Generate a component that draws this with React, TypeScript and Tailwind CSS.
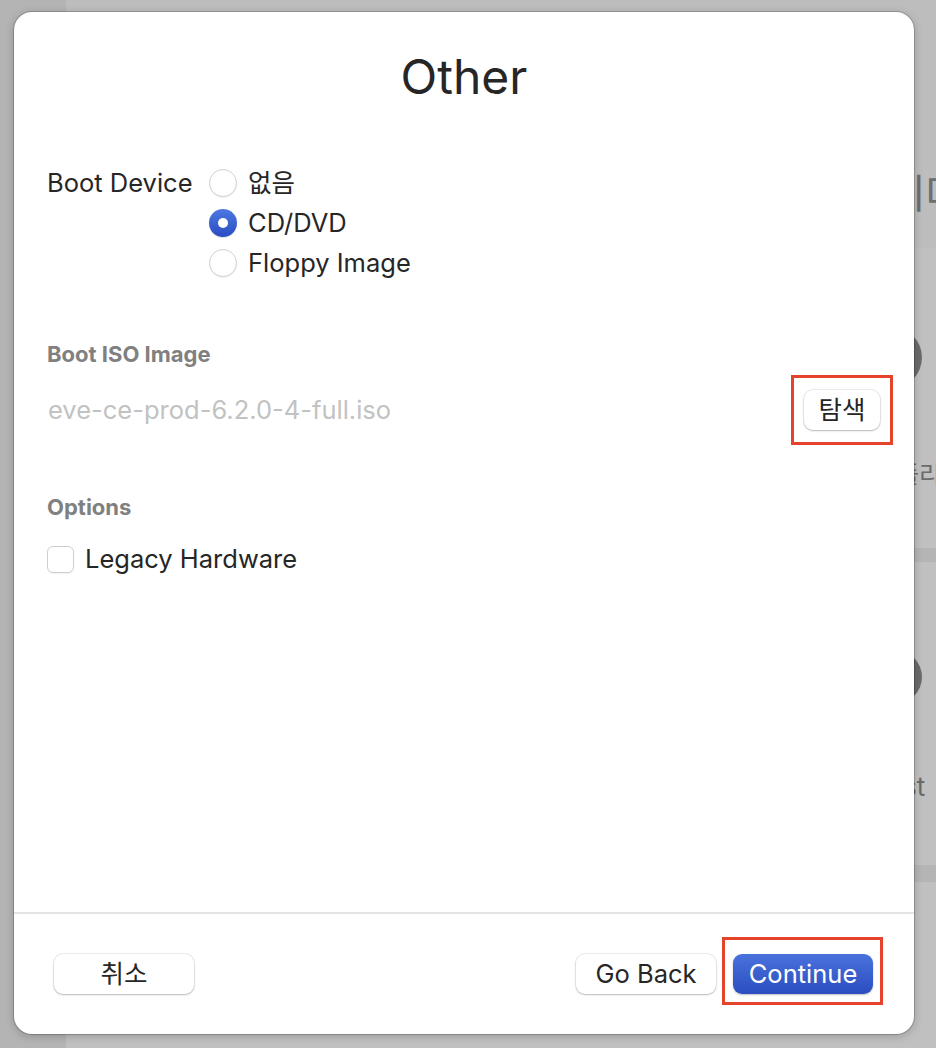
import React from 'react';

const options = ['없음', 'CD/DVD', 'Floppy Image'];

function Radio({ checked }: { checked: boolean }) {
  if (checked) {
    return (
      <span className="flex h-[28px] w-[28px] shrink-0 items-center justify-center rounded-full bg-gradient-to-b from-[#4f78e2] to-[#2a4cc2] shadow-[0_1px_1px_rgba(0,0,0,0.15)]">
        <span className="h-[10px] w-[10px] rounded-full bg-white" />
      </span>
    );
  }
  return (
    <span className="h-[28px] w-[28px] shrink-0 rounded-full border border-[#d2d2d2] bg-white shadow-[0_1px_1px_rgba(0,0,0,0.06)]" />
  );
}

function Button({ children }: { children: React.ReactNode }) {
  return (
    <button className="flex h-[40px] w-[140px] items-center justify-center rounded-[9px] bg-white text-[25.5px] text-[#262626] shadow-[0_0_0_1px_rgba(0,0,0,0.07),0_1px_2px_rgba(0,0,0,0.22)]">
      {children}
    </button>
  );
}

export default function App() {
  const selected = 'CD/DVD';

  return (
    <div className="relative flex h-[1048px] w-[936px] overflow-hidden font-['Inter','Noto_Sans_CJK_KR',sans-serif]">
      {/* window behind the sheet */}
      <div className="w-[66px] shrink-0 bg-[#b4b4b4]" />
      <div className="flex min-w-0 flex-1 flex-col overflow-hidden bg-[#c2c2c2]">
        <div className="flex h-[248px] shrink-0 items-start bg-[#bdbdbd] pl-[786px] pt-[174px]">
          <span className="whitespace-nowrap text-[40px] leading-none text-[#6e6e6e]">습니다</span>
        </div>
        <div className="flex h-[300px] shrink-0 flex-col bg-[#c0c0c0] pl-[795px]">
          <div className="mt-[79px] h-[61px] w-[61px] rounded-full bg-[#6b6b6b]" />
          <span className="ml-[36px] mt-[75px] whitespace-nowrap text-[24px] leading-none text-[#6b6b6b]">플리</span>
        </div>
        <div className="h-[14px] shrink-0 bg-[#b5b5b5]" />
        <div className="flex h-[303px] shrink-0 flex-col bg-[#c0c0c0] pl-[795px]">
          <div className="ml-[7px] mt-[88px] h-[54px] w-[54px] rounded-full bg-[#6b6b6b]" />
          <span className="ml-[12px] mt-[70px] whitespace-nowrap text-[26px] leading-none text-[#6b6b6b]">Test</span>
        </div>
        <div className="h-[17px] shrink-0 bg-[#b5b5b5]" />
        <div className="flex-1 bg-[#c0c0c0]" />
      </div>

      {/* sheet */}
      <div className="absolute left-[14px] top-[12px] flex h-[1022px] w-[900px] flex-col rounded-[18px] bg-white shadow-[0_0_0_1px_rgba(0,0,0,0.18),0_2px_10px_rgba(0,0,0,0.22)]">
        <div className="flex flex-1 flex-col px-[33px] pt-[41px]">
          <h1 className="text-center text-[48px] font-normal leading-[48px] text-[#262626]">Other</h1>

          <div className="mt-[62px] flex">
            <div className="flex h-[40px] w-[162px] items-center text-[25.5px] text-[#262626]">Boot Device</div>
            <div className="flex flex-col">
              {options.map((o) => (
                <label key={o} className="flex h-[40px] items-center gap-[11px] text-[25.5px] text-[#262626]">
                  <Radio checked={o === selected} />
                  <span>{o}</span>
                </label>
              ))}
            </div>
          </div>

          <div className="mt-[59px] text-[22px] font-bold leading-[24px] text-[#808080]">Boot ISO Image</div>
          <div className="mt-[24px] flex h-[40px] items-center justify-between">
            <span className="pl-px text-[25.5px] text-[#c2c2c2]">eve-ce-prod-6.2.0-4-full.iso</span>
            <div className="-my-[15px] -mr-[12px] border-[3px] border-[#e5432b] px-[10px] py-[12px]">
              <button className="flex h-[40px] w-[76px] items-center justify-center rounded-[9px] bg-white text-[25.5px] text-[#262626] shadow-[0_0_0_1px_rgba(0,0,0,0.07),0_1px_2px_rgba(0,0,0,0.22)]">
                탐색
              </button>
            </div>
          </div>

          <div className="mt-[65px] text-[22px] font-bold leading-[24px] text-[#808080]">Options</div>
          <label className="mt-[26px] flex h-[28px] items-center gap-[11px] text-[25.5px] text-[#262626]">
            <span className="h-[27px] w-[27px] rounded-[6px] border border-[#cfcfcf] bg-white shadow-[0_1px_1px_rgba(0,0,0,0.05)]" />
            <span>Legacy Hardware</span>
          </label>
        </div>

        <div className="flex h-[122px] items-start justify-between border-t-2 border-[#e4e4e4] pl-[40px] pr-[31px] pt-[40px]">
          <Button>취소</Button>
          <div className="flex items-start gap-[6px]">
            <Button>Go Back</Button>
            <div className="-mb-[11px] -mt-[17px] border-[3px] border-[#e5432b] pb-[8px] pl-[8px] pr-[7px] pt-[14px]">
              <button className="flex h-[40px] w-[140px] items-center justify-center rounded-[9px] bg-gradient-to-b from-[#4a72dc] to-[#2b4dc0] text-[25.5px] text-white shadow-[0_1px_2px_rgba(0,0,0,0.25)]">
                Continue
              </button>
            </div>
          </div>
        </div>
      </div>
    </div>
  );
}
